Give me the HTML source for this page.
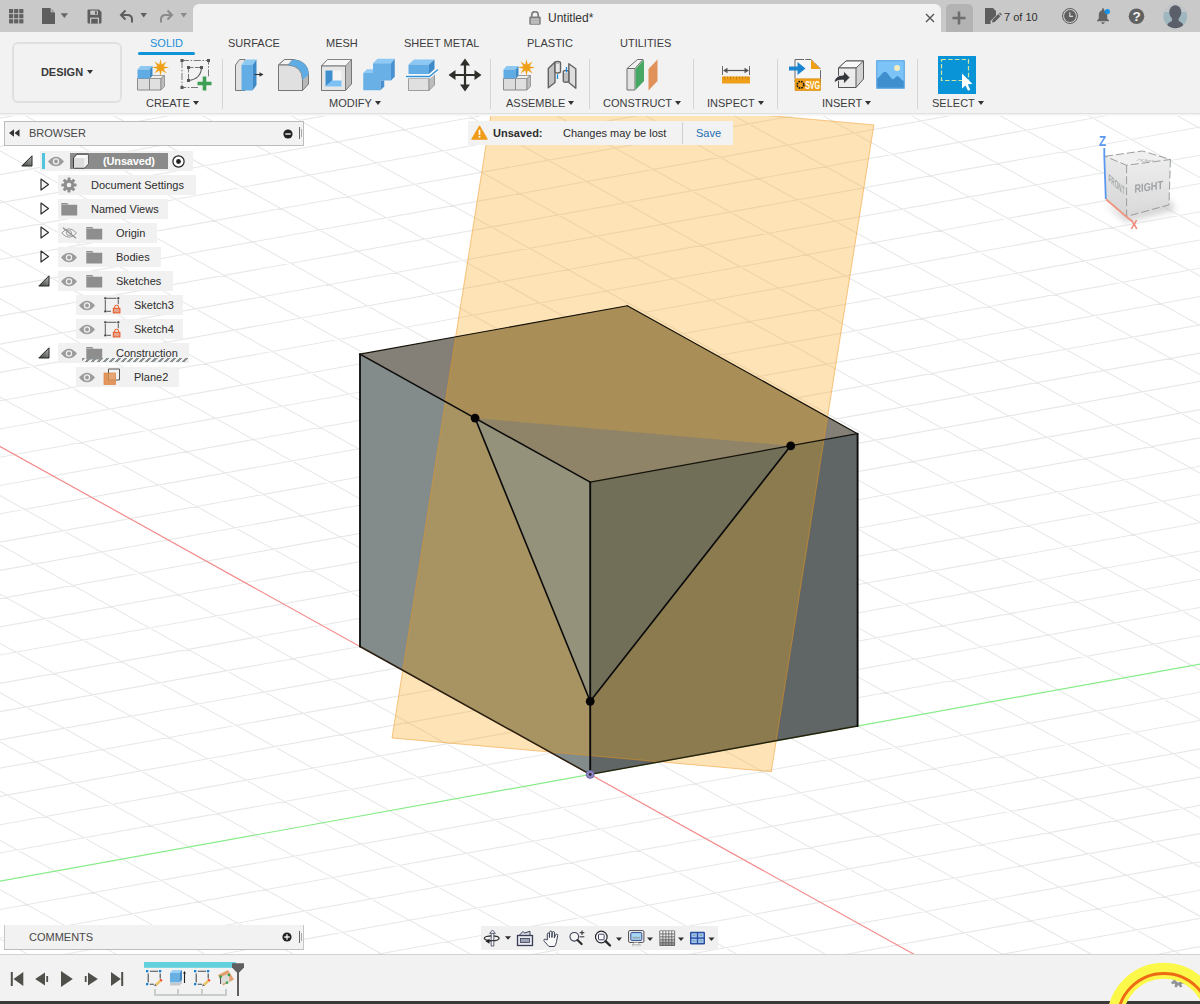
<!DOCTYPE html>
<html><head><meta charset="utf-8"><title>Fusion</title>
<style>
*{box-sizing:border-box;margin:0;padding:0}
html,body{width:1200px;height:1004px;overflow:hidden;background:#fff}
body{font-family:"Liberation Sans",sans-serif;font-size:12px;color:#3a3a3a;position:relative}
#scene{position:absolute;left:0;top:0}
.abs{position:absolute}
#titlebar{position:absolute;left:0;top:0;width:1200px;height:32px;background:#c9c9c9}
#tab{position:absolute;left:193px;top:4px;width:748px;height:28px;background:#f2f2f2;border-radius:6px 6px 0 0}
#plustab{position:absolute;left:946px;top:4px;width:27px;height:28px;background:#b3b3b3;border-radius:5px 5px 0 0}
#toolbar{position:absolute;left:0;top:32px;width:1200px;height:84px;background:#f2f2f2;border-bottom:1px solid #f8f8f8}
#tbline{position:absolute;left:0;top:113px;width:1200px;height:1px;background:#e0e2e2}
.tabname{position:absolute;top:37px;font-size:11px;color:#3c3c3c;white-space:nowrap}
.grp{position:absolute;top:97px;font-size:11px;color:#3c3c3c;white-space:nowrap}
.grp i{display:inline-block;width:0;height:0;border-left:3.5px solid transparent;border-right:3.5px solid transparent;border-top:4px solid #333;margin-left:3px;vertical-align:2px}
.sep{position:absolute;top:59px;width:1px;height:50px;background:#d6d6d6}
#design{position:absolute;left:12px;top:42px;width:110px;height:61px;border:2px solid #dfe1e0;border-radius:6px;background:#f2f2f2;font-weight:bold;font-size:11px;color:#3a3a3a;text-align:center;line-height:57px}
#design i{display:inline-block;width:0;height:0;border-left:3.5px solid transparent;border-right:3.5px solid transparent;border-top:4px solid #333;margin-left:4px;vertical-align:2px}
.ico{position:absolute}
.row{position:absolute;height:20px;background:rgba(240,240,240,0.92)}
.row span{position:absolute;top:4px;font-size:11px;color:#2d2d2d;white-space:nowrap}
</style></head><body>

<svg id="scene" width="1200" height="1004" viewBox="0 0 1200 1004">
<rect width="1200" height="1004" fill="#fff"/>
<path d="M-3618.6 405.6L1729.4 -562.4M-3580.2 426.9L1767.8 -541.1M-3541.9 448.2L1806.1 -519.8M-3503.5 469.6L1844.5 -498.4M-3465.1 490.9L1882.9 -477.1M-3426.8 512.2L1921.3 -455.8M-3388.4 533.5L1959.6 -434.5M-3350.0 554.8L1998.0 -413.2M-3311.6 576.2L2036.4 -391.8M-3273.3 597.5L2074.7 -370.5M-3234.9 618.8L2113.1 -349.2M-3196.5 640.1L2151.5 -327.9M-3158.2 661.4L2189.8 -306.6M-3119.8 682.8L2228.2 -285.2M-3081.4 704.1L2266.6 -263.9M-3043.0 725.4L2305.0 -242.6M-3004.7 746.7L2343.3 -221.3M-2966.3 768.0L2381.7 -200.0M-2927.9 789.4L2420.1 -178.6M-2889.6 810.7L2458.4 -157.3M-2851.2 832.0L2496.8 -136.0M-2812.8 853.3L2535.2 -114.7M-2774.5 874.6L2573.5 -93.4M-2736.1 896.0L2611.9 -72.0M-2697.7 917.3L2650.3 -50.7M-2659.3 938.6L2688.7 -29.4M-2621.0 959.9L2727.0 -8.1M-2582.6 981.2L2765.4 13.2M-2544.2 1002.6L2803.8 34.6M-2505.9 1023.9L2842.1 55.9M-2467.5 1045.2L2880.5 77.2M-2429.1 1066.5L2918.9 98.5M-2390.8 1087.8L2957.2 119.8M-2352.4 1109.2L2995.6 141.2M-2314.0 1130.5L3034.0 162.5M-2275.7 1151.8L3072.3 183.8M-2237.3 1173.1L3110.7 205.1M-2198.9 1194.4L3149.1 226.4M-2160.5 1215.8L3187.5 247.8M-2122.2 1237.1L3225.8 269.1M-2045.4 1279.7L3302.6 311.7M-2007.1 1301.0L3340.9 333.0M-1968.7 1322.4L3379.3 354.4M-1930.3 1343.7L3417.7 375.7M-1891.9 1365.0L3456.1 397.0M-1853.6 1386.3L3494.4 418.3M-1815.2 1407.6L3532.8 439.6M-1776.8 1429.0L3571.2 461.0M-1738.5 1450.3L3609.5 482.3M-1700.1 1471.6L3647.9 503.6M-1661.7 1492.9L3686.3 524.9M-1623.4 1514.2L3724.6 546.2M-1585.0 1535.6L3763.0 567.6M-1546.6 1556.9L3801.4 588.9M-1508.2 1578.2L3839.8 610.2M-1469.9 1599.5L3878.1 631.5M-1431.5 1620.8L3916.5 652.8M-1393.1 1642.2L3954.9 674.2M-1354.8 1663.5L3993.2 695.5M-1316.4 1684.8L4031.6 716.8M-1278.0 1706.1L4070.0 738.1M-1239.7 1727.4L4108.3 759.4M-1201.3 1748.8L4146.7 780.8M-1162.9 1770.1L4185.1 802.1M-1124.6 1791.4L4223.4 823.4M-1086.2 1812.7L4261.8 844.7M-1047.8 1834.0L4300.2 866.0M-1009.4 1855.4L4338.6 887.4M-971.1 1876.7L4376.9 908.7M-932.7 1898.0L4415.3 930.0M-894.3 1919.3L4453.7 951.3M-856.0 1940.6L4492.0 972.6M-817.6 1962.0L4530.4 994.0M-779.2 1983.3L4568.8 1015.3M-740.9 2004.6L4607.1 1036.6M-702.5 2025.9L4645.5 1057.9M-664.1 2047.2L4683.9 1079.2M-625.7 2068.6L4722.3 1100.6M-587.4 2089.9L4760.6 1121.9M-549.0 2111.2L4799.0 1143.2M-3618.6 405.6L-549.0 2111.2M-3551.7 393.5L-482.1 2099.1M-3484.9 381.4L-415.3 2087.0M-3418.0 369.3L-348.4 2074.9M-3351.2 357.2L-281.6 2062.8M-3284.3 345.1L-214.8 2050.7M-3217.5 333.0L-147.9 2038.6M-3150.6 320.9L-81.0 2026.5M-3083.8 308.8L-14.2 2014.4M-3016.9 296.7L52.7 2002.3M-2950.1 284.6L119.5 1990.2M-2883.2 272.5L186.4 1978.1M-2816.4 260.4L253.2 1966.0M-2749.5 248.3L320.1 1953.9M-2682.7 236.2L386.9 1941.8M-2615.8 224.1L453.8 1929.7M-2549.0 212.0L520.6 1917.6M-2482.1 199.9L587.5 1905.5M-2415.3 187.8L654.3 1893.4M-2348.4 175.7L721.2 1881.3M-2281.6 163.6L788.0 1869.2M-2214.8 151.5L854.9 1857.1M-2147.9 139.4L921.7 1845.0M-2081.0 127.3L988.6 1832.9M-2014.2 115.2L1055.4 1820.8M-1947.3 103.1L1122.2 1808.7M-1880.5 91.0L1189.1 1796.6M-1813.6 78.9L1256.0 1784.5M-1746.8 66.8L1322.8 1772.4M-1679.9 54.7L1389.7 1760.3M-1613.1 42.6L1456.5 1748.2M-1546.2 30.5L1523.3 1736.1M-1479.4 18.4L1590.2 1724.0M-1412.5 6.3L1657.1 1711.9M-1345.7 -5.8L1723.9 1699.8M-1278.8 -17.9L1790.8 1687.7M-1212.0 -30.0L1857.6 1675.6M-1145.1 -42.1L1924.5 1663.5M-1078.3 -54.2L1991.3 1651.4M-1011.4 -66.3L2058.2 1639.3M-877.7 -90.5L2191.8 1615.1M-810.9 -102.6L2258.7 1603.0M-744.0 -114.7L2325.6 1590.9M-677.2 -126.8L2392.4 1578.8M-610.3 -138.9L2459.2 1566.7M-543.5 -151.0L2526.1 1554.6M-476.6 -163.1L2592.9 1542.5M-409.8 -175.2L2659.8 1530.4M-342.9 -187.3L2726.7 1518.3M-276.1 -199.4L2793.5 1506.2M-209.2 -211.5L2860.3 1494.1M-142.4 -223.6L2927.2 1482.0M-75.5 -235.7L2994.1 1469.9M-8.7 -247.8L3060.9 1457.8M58.1 -259.9L3127.8 1445.7M125.0 -272.0L3194.6 1433.6M191.8 -284.1L3261.4 1421.5M258.7 -296.2L3328.3 1409.4M325.5 -308.3L3395.1 1397.3M392.4 -320.4L3462.0 1385.2M459.2 -332.5L3528.8 1373.1M526.1 -344.6L3595.7 1361.0M593.0 -356.7L3662.6 1348.9M659.8 -368.8L3729.4 1336.8M726.6 -380.9L3796.2 1324.7M793.5 -393.0L3863.1 1312.6M860.3 -405.1L3929.9 1300.5M927.2 -417.2L3996.8 1288.4M994.0 -429.3L4063.6 1276.3M1060.9 -441.4L4130.5 1264.2M1127.8 -453.5L4197.4 1252.1M1194.6 -465.6L4264.2 1240.0M1261.4 -477.7L4331.0 1227.9M1328.3 -489.8L4397.9 1215.8M1395.2 -501.9L4464.8 1203.7M1462.0 -514.0L4531.6 1191.6M1528.8 -526.1L4598.4 1179.5M1595.7 -538.2L4665.3 1167.4M1662.5 -550.3L4732.1 1155.3M1729.4 -562.4L4799.0 1143.2" stroke="#e7e9e9" stroke-width="1.1" fill="none"/>
<path d="M-944.6 -78.4L2125.0 1627.2" stroke="#f48c8c" stroke-width="1.2" fill="none"/>
<path d="M-2083.8 1258.4L3264.2 290.4" stroke="#88ec88" stroke-width="1.2" fill="none"/>
<defs><clipPath id="cpl"><polygon points="494.60,91.20 873.90,124.90 771.30,771.70 392.00,738.00"/></clipPath>
<clipPath id="cout"><path clip-rule="evenodd" d="M0 0H1200V1004H0Z M359.98 646.48 L590.20 774.40 L857.60 726.00 L857.60 433.68 L627.38 305.76 L359.98 354.16 Z"/></clipPath></defs>
<polygon points="359.98,646.48 590.20,774.40 590.20,482.08 359.98,354.16" fill="rgb(131,140,139)"/>
<polygon points="590.20,774.40 857.60,726.00 857.60,433.68 590.20,482.08" fill="rgb(96,102,101)"/>
<polygon points="359.98,354.16 590.20,482.08 857.60,433.68 627.38,305.76" fill="rgb(132,128,120)"/>
<g clip-path="url(#cpl)">
<polygon points="359.98,646.48 590.20,774.40 590.20,482.08 359.98,354.16" fill="rgb(168,148,98)"/>
<polygon points="590.20,774.40 857.60,726.00 857.60,433.68 590.20,482.08" fill="rgb(139,123,78)"/>
<polygon points="359.98,354.16 590.20,482.08 857.60,433.68 627.38,305.76" fill="rgb(169,142,87)"/>
</g>
<polygon points="475.09,418.12 590.20,482.08 590.20,701.32" fill="rgb(148,146,123)"/>
<polygon points="790.75,445.78 590.20,482.08 590.20,701.32" fill="rgb(114,111,89)"/>
<polygon points="475.09,418.12 590.20,482.08 790.75,445.78" fill="rgb(144,132,104)"/>
<polygon points="494.60,91.20 873.90,124.90 771.30,771.70 392.00,738.00" fill="rgb(250,158,0)" fill-opacity="0.285" clip-path="url(#cout)"/>
<polygon points="494.60,91.20 873.90,124.90 771.30,771.70 392.00,738.00" fill="none" stroke="rgb(240,150,30)" stroke-opacity="0.5" stroke-width="1"/>
<line x1="359.98" y1="646.48" x2="590.20" y2="774.40" stroke="#2a2012" stroke-width="1.5" stroke-linecap="round"/>
<line x1="590.20" y1="774.40" x2="857.60" y2="726.00" stroke="#26200e" stroke-width="1.4" stroke-linecap="round"/>
<line x1="359.98" y1="646.48" x2="359.98" y2="354.16" stroke="#0b0b0b" stroke-width="1.8" stroke-linecap="round"/>
<line x1="857.60" y1="726.00" x2="857.60" y2="433.68" stroke="#0b0b0b" stroke-width="1.9" stroke-linecap="round"/>
<line x1="590.20" y1="774.40" x2="590.20" y2="482.08" stroke="#0b0b0b" stroke-width="1.9" stroke-linecap="round"/>
<line x1="359.98" y1="354.16" x2="590.20" y2="482.08" stroke="#0b0b0b" stroke-width="1.5" stroke-linecap="round"/>
<line x1="590.20" y1="482.08" x2="857.60" y2="433.68" stroke="#14120a" stroke-width="1.2" stroke-linecap="round"/>
<line x1="359.98" y1="354.16" x2="627.38" y2="305.76" stroke="#14120a" stroke-width="1.2" stroke-linecap="round"/>
<line x1="627.38" y1="305.76" x2="857.60" y2="433.68" stroke="#14120a" stroke-width="1.2" stroke-linecap="round"/>
<line x1="475.09" y1="418.12" x2="590.20" y2="701.32" stroke="#0b0b0b" stroke-width="1.6" stroke-linecap="round"/>
<line x1="790.75" y1="445.78" x2="590.20" y2="701.32" stroke="#0b0b0b" stroke-width="1.7" stroke-linecap="round"/>
<circle cx="475.09" cy="418.12" r="4.4" fill="#050505"/>
<circle cx="790.75" cy="445.78" r="4.4" fill="#050505"/>
<circle cx="590.20" cy="701.32" r="4.4" fill="#050505"/>
<circle cx="590.20" cy="774.40" r="4" fill="#8d84c6" stroke="#6c66a0" stroke-width="0.8"/>
<circle cx="590.20" cy="774.40" r="1.3" fill="#222"/>
</svg>
<div id="titlebar">
 <div id="tab"></div><div id="plustab"></div>
 <!-- app grid -->
 <svg class="ico" style="left:8.700px;top:8.700px" width="15" height="15" viewBox="0 0 15 15"><g fill="#616161"><rect x="0.0" y="0.0" width="4.200" height="4.200"/><rect x="5.1" y="0.0" width="4.200" height="4.200"/><rect x="10.2" y="0.0" width="4.200" height="4.200"/><rect x="0.0" y="5.1" width="4.200" height="4.200"/><rect x="5.1" y="5.1" width="4.200" height="4.200"/><rect x="10.2" y="5.1" width="4.200" height="4.200"/><rect x="0.0" y="10.2" width="4.200" height="4.200"/><rect x="5.1" y="10.2" width="4.200" height="4.200"/><rect x="10.2" y="10.2" width="4.200" height="4.200"/></g></svg>
 <!-- file -->
 <svg class="ico" style="left:42px;top:8px" width="28" height="17" viewBox="0 0 28 17"><path d="M0 0H8.5L13 4.5V16H0Z" fill="#5e5e5e"/><path d="M9 0V4H13" fill="#c9c9c9" stroke="#c9c9c9" stroke-width="0.6"/><path d="M9.600 1V3.500H12.200Z" fill="#8a8a8a"/><path d="M18.700 5.300H26L22.350 9.900Z" fill="#666"/></svg>
 <!-- save -->
 <svg class="ico" style="left:87px;top:8.500px" width="15" height="15" viewBox="0 0 15 15"><path d="M0.5 1.5a1 1 0 0 1 1-1H12L14.5 3V13.5a1 1 0 0 1-1 1H1.5a1 1 0 0 1-1-1Z" fill="#5e5e5e"/><rect x="3.3" y="1.6" width="7.6" height="4.2" fill="#c9c9c9"/><rect x="8" y="2.2" width="1.8" height="3" fill="#5e5e5e"/><rect x="3" y="8.6" width="9" height="5.9" fill="#c9c9c9"/><rect x="4.2" y="9.8" width="6.6" height="4.7" fill="#5e5e5e"/></svg>
 <!-- undo -->
 <svg class="ico" style="left:119px;top:9px" width="30" height="15" viewBox="0 0 30 15"><path d="M6.5 1.5L2 6L6.5 10.5" fill="none" stroke="#5e5e5e" stroke-width="2"/><path d="M2.5 6H8.5Q13 6 13 10.5V13.5" fill="none" stroke="#5e5e5e" stroke-width="2"/><path d="M21.5 4H28L24.7 8.5Z" fill="#5e5e5e"/></svg>
 <!-- redo -->
 <svg class="ico" style="left:159px;top:9px" width="30" height="15" viewBox="0 0 30 15"><g transform="translate(15,0) scale(-1,1)"><path d="M6.5 1.5L2 6L6.5 10.5" fill="none" stroke="#8a8a8a" stroke-width="2"/><path d="M2.5 6H8.5Q13 6 13 10.5V13.5" fill="none" stroke="#8a8a8a" stroke-width="2"/></g><path d="M21.5 4H28L24.7 8.5Z" fill="#8a8a8a"/></svg>
 <!-- lock + title -->
 <svg class="ico" style="left:529px;top:11px" width="12" height="14" viewBox="0 0 12 14"><path d="M2.8 6V3.8a3.2 3.2 0 0 1 6.4 0V6" fill="none" stroke="#7d7d7d" stroke-width="1.7"/><rect x="0.3" y="5.6" width="11.4" height="8.1" rx="1" fill="#7d7d7d"/><rect x="1.8" y="7.6" width="8.4" height="1" fill="#f2f2f2"/><rect x="1.8" y="9.6" width="8.4" height="1" fill="#f2f2f2"/><rect x="1.8" y="11.5" width="8.4" height="1" fill="#f2f2f2"/></svg>
 <div class="abs" style="left:548px;top:11px;font-size:12px;color:#333">Untitled*</div>
 <!-- close x -->
 <svg class="ico" style="left:925px;top:13px" width="10" height="10" viewBox="0 0 10 10"><path d="M1 1L9 9M9 1L1 9" stroke="#555" stroke-width="1.4"/></svg>
 <!-- plus -->
 <svg class="ico" style="left:952px;top:11px" width="14" height="14" viewBox="0 0 14 14"><path d="M7 0.5V13.5M0.5 7H13.5" stroke="#6e6e6e" stroke-width="2.6"/></svg>
 <!-- job status -->
 <svg class="ico" style="left:985px;top:8px" width="17" height="17" viewBox="0 0 17 17"><path d="M0 0H8L11 3V7.5L5.5 13V16H0Z" fill="#5e5e5e"/><path d="M7 14.5L7.6 11.8L13.3 6.1L15.4 8.2L9.7 13.9Z" fill="#5e5e5e"/><path d="M14 5.4L14.9 4.5L17 6.6L16.1 7.5Z" fill="#5e5e5e"/></svg>
 <div class="abs" style="left:1004px;top:11px;font-size:11px;color:#2e2e2e">7 of 10</div>
 <!-- clock -->
 <svg class="ico" style="left:1061px;top:7px" width="18" height="18" viewBox="0 0 18 18"><circle cx="9" cy="9" r="7.500" fill="none" stroke="#5e5e5e" stroke-width="1"/><circle cx="9" cy="9" r="5.900" fill="#606060"/><path d="M8.800 5.300V9.300H12" fill="none" stroke="#d4d4d4" stroke-width="1.200"/></svg>
 <!-- bell -->
 <svg class="ico" style="left:1094px;top:7px" width="18" height="18" viewBox="0 0 18 18"><path d="M8 2.200a1 1 0 0 1 2 0V3.200C12.300 3.800 13.200 5.800 13.200 8V11.500L15 13.600V14.300H3V13.600L4.800 11.500V8C4.800 5.800 5.700 3.800 8 3.200Z" fill="#646464"/><path d="M7.300 15.200H10.700A1.700 1.700 0 0 1 7.300 15.200Z" fill="#646464"/><circle cx="13.300" cy="4.600" r="2.700" fill="#1592e6"/></svg>
 <!-- help -->
 <svg class="ico" style="left:1128px;top:8px" width="17" height="17" viewBox="0 0 17 17"><circle cx="8.500" cy="8.200" r="7.800" fill="#616161"/><text x="8.500" y="13" font-family="Liberation Sans" font-weight="bold" font-size="13.500" fill="#f4f4f4" text-anchor="middle">?</text></svg>
 <!-- avatar -->
 <svg class="ico" style="left:1163px;top:4px" width="25" height="25" viewBox="0 0 25 25"><defs><clipPath id="av"><circle cx="12.300" cy="12.300" r="11.900"/></clipPath></defs><g clip-path="url(#av)"><rect width="25" height="25" fill="#a0b6be"/><rect width="25" height="8" fill="#c2c6ca"/><rect y="20" width="25" height="5" fill="#b4bcc2"/><g fill="#5a5f69"><ellipse cx="12.300" cy="8.300" rx="6" ry="7"/><path d="M9 13H15.600V17Q20 18 22 25H2.500Q4.500 18 9 17Z"/></g></g></svg>
</div>

<div id="toolbar"></div><div id="tbline"></div>
<div id="design">DESIGN<i></i></div>
<div class="tabname" style="left:150px;color:#1a8fd8">SOLID</div>
<div class="abs" style="left:138px;top:52px;width:57px;height:3px;background:#1193d9;border-radius:1.5px"></div>
<div class="tabname" style="left:228px">SURFACE</div>
<div class="tabname" style="left:326px">MESH</div>
<div class="tabname" style="left:404px">SHEET METAL</div>
<div class="tabname" style="left:527px">PLASTIC</div>
<div class="tabname" style="left:620px">UTILITIES</div>
<div class="grp" style="left:146px">CREATE<i></i></div>
<div class="grp" style="left:329px">MODIFY<i></i></div>
<div class="grp" style="left:506px">ASSEMBLE<i></i></div>
<div class="grp" style="left:603px">CONSTRUCT<i></i></div>
<div class="grp" style="left:707px">INSPECT<i></i></div>
<div class="grp" style="left:822px">INSERT<i></i></div>
<div class="grp" style="left:932px">SELECT<i></i></div>
<div class="sep" style="left:222px"></div><div class="sep" style="left:490px"></div><div class="sep" style="left:589px"></div><div class="sep" style="left:693px"></div><div class="sep" style="left:777px"></div><div class="sep" style="left:917px"></div>
<!-- 1 new component -->
<svg class="ico" style="left:136px;top:58px" width="34" height="34" viewBox="0 0 34 34">
 <path d="M1.500 20.500H13.500V32H1.500Z" fill="#dcdcdc" stroke="#8a8a8a" stroke-width="1"/>
 <path d="M13.500 20.500H25V32H13.500Z" fill="#e0e0e0" stroke="#8a8a8a" stroke-width="1"/>
 <path d="M13.500 20.500L16.500 17.500H28.500L25 20.500Z" fill="#efefef" stroke="#8a8a8a" stroke-width="0.8"/>
 <path d="M25 20.500L28.500 17.500V28.500L25 32Z" fill="#bdbdbd" stroke="#8a8a8a" stroke-width="0.8"/>
 <path d="M1.500 11.500L4.500 8H16.500L13.500 11.500Z" fill="#8cc8f2"/>
 <path d="M1.500 11.500H13.500V20.500H1.500Z" fill="#5fabe4"/>
 <path d="M13.500 11.500L16.500 8V17.500L13.500 20.500Z" fill="#3d8cc9"/>
 <path d="M24.50 0.90L25.76 6.45L30.58 3.42L27.55 8.24L33.10 9.50L27.55 10.76L30.58 15.58L25.76 12.55L24.50 18.10L23.24 12.55L18.42 15.58L21.45 10.76L15.90 9.50L21.45 8.24L18.42 3.42L23.24 6.45Z" fill="#f0a018"/>
</svg>
<!-- 2 create sketch -->
<svg class="ico" style="left:179px;top:58px" width="34" height="34" viewBox="0 0 34 34">
 <path d="M3 2.500H29.500V20M19 29.500H3V2.500" fill="none" stroke="#6a6a6a" stroke-width="0.9" stroke-dasharray="7 1.6 1.600 1.600"/>
 <rect x="1.500" y="1" width="3" height="3" fill="#555"/><rect x="28" y="1" width="3" height="3" fill="#555"/><rect x="1.500" y="28" width="3" height="3" fill="#555"/>
 <path d="M9.500 9.500H22.500M9.500 9.500V22.500" fill="none" stroke="#6a6a6a" stroke-width="0.9" stroke-dasharray="5 1.500"/>
 <path d="M22.500 9.500Q22 21 9.500 22.500" fill="none" stroke="#606060" stroke-width="1.1"/>
 <rect x="8" y="8" width="3" height="3" fill="#555"/><rect x="21" y="8" width="3" height="3" fill="#555"/><rect x="8" y="21" width="3" height="3" fill="#555"/>
 <path d="M25.500 18.500V32.500M18.500 25.500H32.500" stroke="#3fa055" stroke-width="3.600"/>
</svg>
<!-- 3 press pull -->
<svg class="ico" style="left:233px;top:58px" width="34" height="34" viewBox="0 0 34 34">
 <path d="M2.500 7L6.500 1.500H12V32.500H2.500Z" fill="#e2e2e2" stroke="#777" stroke-width="1"/>
 <path d="M8.500 7L12.500 1.500H23.500L19.500 7Z" fill="#8cc8f2"/>
 <path d="M8.500 7H19.500V32.500H8.500Z" fill="#62ade6"/>
 <path d="M19.500 7L23.500 1.500V27L19.500 32.500Z" fill="#3c8ac8"/>
 <path d="M21.500 16.500H27.500" stroke="#333" stroke-width="1.100"/><path d="M26.500 14.200L30.500 16.500L26.500 18.800Z" fill="#333"/>
</svg>
<!-- 4 fillet -->
<svg class="ico" style="left:276px;top:58px" width="34" height="34" viewBox="0 0 34 34">
 <path d="M2.500 7L8.500 1.500H17Q32.500 3 32.500 17V26L26.500 32.500H2.500Z" fill="#b8b8b8" stroke="#777" stroke-width="1"/><path d="M2.500 7L8.500 1.500H17L12 7Z" fill="#f2f2f2" stroke="#777" stroke-width="1"/>
 <path d="M2.500 7H12Q26.500 8 26.500 22V32.500H2.500Z" fill="#e0e0e0" stroke="#777" stroke-width="1"/>
 <path d="M12 7L17 1.500Q32.500 3 32.500 17L26.500 22Q26.500 8 12 7Z" fill="#5fabe4"/>
</svg>
<!-- 5 shell -->
<svg class="ico" style="left:319px;top:58px" width="34" height="34" viewBox="0 0 34 34">
 <path d="M2.500 8L8.500 1.500H32.500V26L26.500 32.500H2.500Z" fill="#bcbcbc" stroke="#777" stroke-width="1"/>
 <path d="M2.500 8L8.500 1.500H32.500L26.500 8Z" fill="#f6f6f6" stroke="#777" stroke-width="0.800"/>
 <path d="M2.500 8H26.500V32.500H2.500Z" fill="#e6e6e6" stroke="#777" stroke-width="1"/>
 <path d="M6.500 12.500H22.500V28.500H6.500Z" fill="#f4f4f4"/>
 <path d="M6.500 12.500H13.500V22.500L6.500 28.500Z" fill="#3f8fce"/>
 <path d="M6.500 28.500L13.500 22.500H22.500V28.500Z" fill="#7cc0f4"/>
</svg>
<!-- 6 combine -->
<svg class="ico" style="left:362px;top:58px" width="34" height="34" viewBox="0 0 34 34">
 <path d="M11 5.250L15.500 0.750H32.750L29 5.250Z" fill="#8ecaf5"/>
 <path d="M29 5.250L32.750 0.750V18.750L29 22.500Z" fill="#4890d0"/>
 <path d="M11 5.250H29V22.500H11Z" fill="#68b0e5"/>
 <path d="M1.250 15L5 11.250H11V15Z" fill="#8ecaf5"/>
 <path d="M1.250 15H18.500V32.250H1.250Z" fill="#68b0e5"/>
 <path d="M18.500 22.500H22.250V28.500L18.500 32.250Z" fill="#4890d0"/>
</svg>
<!-- 7 split body -->
<svg class="ico" style="left:405px;top:58px" width="34" height="34" viewBox="0 0 34 34">
 <path d="M3.500 20.500H24V32.500H3.500Z" fill="#e0e0e0" stroke="#8a8a8a" stroke-width="0.800"/>
 <path d="M24 20.500L29.500 15.500V27L24 32.500Z" fill="#bdbdbd" stroke="#8a8a8a" stroke-width="0.800"/>
 <path d="M3.500 6.500L9 1.500H29.500L24 6.500Z" fill="#8cc8f2"/>
 <path d="M3.500 6.500H24V16H3.500Z" fill="#62ade6"/>
 <path d="M24 6.500L29.500 1.500V11L24 16Z" fill="#3c8ac8"/>
 <path d="M1 18.500H24.500L33 11.500" fill="none" stroke="#fff" stroke-width="3.400"/>
 <path d="M1 18.500H24.500L33 11.500" fill="none" stroke="#2d8fd6" stroke-width="1.400"/>
</svg>
<!-- 8 move -->
<svg class="ico" style="left:448px;top:58px" width="34" height="34" viewBox="0 0 34 34">
 <path d="M17 5V29M5 17H29" stroke="#2f2f2a" stroke-width="2.200"/>
 <path d="M17 0.500L22 7.500H12Z M17 33.500L22 26.500H12Z M0.500 17L7.500 12V22Z M33.500 17L26.500 12V22Z" fill="#2f2f2a"/>
</svg>
<!-- 9 assemble new component -->
<svg class="ico" style="left:502px;top:58px" width="34" height="34" viewBox="0 0 34 34">
 <path d="M1.500 20.500H13.500V32H1.500Z" fill="#dcdcdc" stroke="#8a8a8a" stroke-width="1"/>
 <path d="M13.500 20.500H25V32H13.500Z" fill="#e0e0e0" stroke="#8a8a8a" stroke-width="1"/>
 <path d="M13.500 20.500L16.500 17.500H28.500L25 20.500Z" fill="#efefef" stroke="#8a8a8a" stroke-width="0.800"/>
 <path d="M25 20.500L28.500 17.500V28.500L25 32Z" fill="#bdbdbd" stroke="#8a8a8a" stroke-width="0.800"/>
 <path d="M1.500 11.500L4.500 8H16.500L13.500 11.500Z" fill="#8cc8f2"/>
 <path d="M1.500 11.500H13.500V20.500H1.500Z" fill="#5fabe4"/>
 <path d="M13.500 11.500L16.500 8V17.500L13.500 20.500Z" fill="#3d8cc9"/>
 <path d="M24.50 0.90L25.76 6.45L30.58 3.42L27.55 8.24L33.10 9.50L27.55 10.76L30.58 15.58L25.76 12.55L24.50 18.10L23.24 12.55L18.42 15.58L21.45 10.76L15.90 9.50L21.45 8.24L18.42 3.42L23.24 6.45Z" fill="#f0a018"/>
</svg>
<!-- 10 joint -->
<svg class="ico" style="left:546px;top:58px" width="32" height="34" viewBox="0 0 32 34">
 <g stroke="#636363" stroke-width="1.400" stroke-linejoin="round">
 <path d="M2.300 10.500L9 4V24.500L2.300 29.700Z" fill="#c2c2c2"/>
 <path d="M9 5Q9 3.500 11.700 3.500T14.500 5V13.500Q14.500 15 11.700 15T9 13.500Z" fill="#e6e6e6"/>
 <path d="M22.800 5.700L29.800 10.800V30.300L22.800 24.500Z" fill="#dedede"/>
 <path d="M17.300 14Q17.300 12.500 20 12.500T22.800 14V22.800Q22.800 24.300 20 24.300T17.300 22.800Z" fill="#c0c0c0"/>
 </g>
 <ellipse cx="11.700" cy="5.300" rx="1.500" ry="0.600" fill="#aaa"/>
 <ellipse cx="20" cy="14.200" rx="2" ry="0.900" fill="#eee"/>
 <path d="M11.500 16.300V21M20.500 9V14.500" stroke="#1b8fd8" stroke-width="1.300"/>
</svg>
<!-- 11 construct plane -->
<svg class="ico" style="left:625px;top:58px" width="34" height="34" viewBox="0 0 34 34">
 <path d="M2 10.500L12.500 1.500H18L10 10.500Z" fill="#f0f0f0" stroke="#6e6e6e" stroke-width="1"/>
 <path d="M2 10.500H10V32H2Z" fill="#e2e2e2" stroke="#6e6e6e" stroke-width="1"/>
 <path d="M10.500 11L19 1.500V23L10.500 32Z" fill="#47a866"/>
 <path d="M23.500 11L32.500 1.500V23L23.500 32.500Z" fill="#e0925a"/>
</svg>
<!-- 12 measure -->
<svg class="ico" style="left:720px;top:64px" width="32" height="22" viewBox="0 0 32 22">
 <path d="M2.500 2V11M29.500 2V11" stroke="#6a6a6a" stroke-width="1"/>
 <path d="M5 6.500H27" stroke="#555" stroke-width="1.200"/>
 <path d="M3 6.500L7.500 3.800V9.200Z M29 6.500L24.500 3.800V9.200Z" fill="#555"/>
 <rect x="2" y="12.500" width="28" height="7" fill="#f0a018"/>
 <path d="M4.500 12.500V15.500M7.500 12.500V14.500M10.500 12.500V15.500M13.500 12.500V14.500M16.500 12.500V15.500M19.500 12.500V14.500M22.500 12.500V15.500M25.500 12.500V14.500M28 12.500V15.500" stroke="#c07a08" stroke-width="0.800"/>
</svg>
<!-- 13 insert svg -->
<svg class="ico" style="left:788px;top:58px" width="34" height="34" viewBox="0 0 34 34">
 <path d="M7 1.500H23L32.500 11V24H7Z" fill="#f6f6f6" stroke="#5a5a5a" stroke-width="0.900" stroke-dasharray="9 1.200"/>
 <path d="M23 1.500L32.500 11H23Z" fill="#f0a018"/>
 <path d="M1 8.500H9.500V4L17.500 10.500L9.500 17V12.500H1Z" fill="#1b85d0"/>
 <rect x="7" y="20.800" width="25.500" height="11.800" fill="#f0a018" stroke="#d28a10" stroke-width="0.600"/>
 <circle cx="12.500" cy="26.800" r="3.300" fill="none" stroke="#1a1a1a" stroke-width="1.700" stroke-dasharray="1.700 0.900"/>
 <text x="17.200" y="30.800" font-family="Liberation Sans" font-weight="bold" font-size="10.500" fill="#fff" textLength="14.800" lengthAdjust="spacingAndGlyphs">SVG</text>
</svg>
<!-- 14 insert derive -->
<svg class="ico" style="left:832px;top:58px" width="34" height="34" viewBox="0 0 34 34">
 <path d="M6.500 10L14 3H31.500V21L24 29.500H6.500Z" fill="#d2d2d2" stroke="#4a4a4a" stroke-width="0.900"/>
 <path d="M6.500 10L14 3H31.500L24 10Z" fill="#f8f8f8" stroke="#4a4a4a" stroke-width="0.900"/>
 <path d="M6.500 10H24V29.500H6.500Z" fill="#ececec" stroke="#4a4a4a" stroke-width="0.900"/>
 <path d="M2 25Q3 17 11.500 17V13L18 19.500L11.500 26V22Q5.500 21.500 2 25Z" fill="#33363a" stroke="#f4f4f4" stroke-width="0.800"/>
</svg>
<!-- 15 canvas -->
<svg class="ico" style="left:876px;top:60px" width="29" height="29" viewBox="0 0 31 31">
 <rect x="0.800" y="0.800" width="29.400" height="29.400" fill="#7cc4f8" stroke="#4a9be0" stroke-width="1"/>
 <path d="M1.300 20Q4 18 6.500 14.500Q9.500 10.500 12.500 14.500Q15.500 19 17.500 20.500Q19 21 20.500 19Q23 16 25.500 19Q27.500 21.500 29.700 22.500V29.700H1.300Z" fill="#3f8fce"/>
 <circle cx="22.500" cy="8.500" r="3.200" fill="#f2ecc0"/>
</svg>
<!-- 16 select -->
<svg class="ico" style="left:938px;top:56px" width="38" height="38" viewBox="0 0 38 38">
 <rect width="38" height="38" fill="#0a94d8"/>
 <rect x="3.500" y="3.500" width="27" height="21" fill="none" stroke="#cfe6a0" stroke-width="1.200" stroke-dasharray="4.500 2.200"/>
 <path d="M24 17.500L34.500 28L29.800 28.300L32.300 33.800L30 34.800L27.500 29.500L24 32.500Z" fill="#fff"/>
</svg>

<!-- BROWSER header -->
<div class="abs" style="left:4px;top:121px;width:300px;height:25px;background:#f2f2f2;border:1px solid #bcbcbc"></div>
<svg class="ico" style="left:9px;top:129px" width="11" height="8" viewBox="0 0 11 8"><path d="M0 4L5 0.300V7.700ZM5.500 4L10.500 0.300V7.700Z" fill="#333"/></svg>
<div class="abs" style="left:29px;top:127px;font-size:11px;color:#484848">BROWSER</div>
<svg class="ico" style="left:283px;top:129px" width="10" height="10" viewBox="0 0 10 10"><circle cx="5" cy="5" r="4.600" fill="#222"/><rect x="2.300" y="4.300" width="5.400" height="1.400" fill="#f2f2f2"/></svg>
<div class="abs" style="left:299px;top:127px;width:1px;height:12px;background:#666"></div>
<div class="abs" style="left:301px;top:129px;width:1px;height:8px;background:#aaa"></div>
<svg width="0" height="0" style="position:absolute"><defs>
 <g id="eye"><path d="M0 5.500Q8 -4.200 16 5.500Q8 15.200 0 5.500Z" fill="#9b9b9b"/><circle cx="8" cy="5.500" r="3.200" fill="#f0f0f0"/><circle cx="8" cy="5.500" r="1.900" fill="#9b9b9b"/></g>
 <g id="folder"><path d="M0.300 2H6.300L7.500 3.800H16.200V14.500H0.300Z" fill="#8e8e8e"/><path d="M0.300 3.500H6.800" stroke="#d8d8d8" stroke-width="0.500"/></g>
 <g id="arrowR"><path d="M1 1L8.500 6.500L1 12Z" fill="#f6f6f6" stroke="#2f2f2f" stroke-width="1.200" stroke-linejoin="round"/></g>
 <linearGradient id="agr" x1="1" y1="0" x2="0.3" y2="1"><stop offset="0" stop-color="#b4bab4"/><stop offset="1" stop-color="#4c504c"/></linearGradient><g id="arrowD"><path d="M11 0.800V11H0.800Z" fill="url(#agr)" stroke="#262626" stroke-width="1" stroke-linejoin="round"/></g>
 <g id="sketchico"><path d="M2.500 1.300H12.500M1.300 3V13M14.300 3V7.300M2.500 14.300H7" fill="none" stroke="#4a4a4a" stroke-width="0.900"/><rect x="0.300" y="0.300" width="2" height="2" fill="#3a3a3a"/><rect x="13.300" y="0.300" width="2" height="2" fill="#3a3a3a"/><rect x="0.300" y="13.300" width="2" height="2" fill="#3a3a3a"/><path d="M10.600 11.300V10.200a2 2 0 0 1 4 0V11.300" fill="none" stroke="#e8541e" stroke-width="1"/><rect x="9.300" y="11.300" width="6.600" height="4.600" fill="#eaa68c" stroke="#e8541e" stroke-width="1"/></g>
</defs></svg>
<!-- row1 -->
<svg class="ico" style="left:21px;top:155px" width="12" height="12" viewBox="0 0 12 12"><use href="#arrowD"/></svg>
<div class="row" style="left:40px;top:151px;width:153px"></div>
<div class="abs" style="left:42px;top:153px;width:3px;height:16px;background:#4fc4dc"></div>
<svg class="ico" style="left:48px;top:156px" width="16" height="11" viewBox="0 0 16 11"><use href="#eye"/></svg>
<div class="abs" style="left:70px;top:153px;width:98px;height:16px;background:#8b8b8b"></div>
<svg class="ico" style="left:72px;top:153px" width="18" height="16" viewBox="0 0 18 16"><path d="M1.500 5L5 1.200H16V11L12.500 15H2.500Q1.500 15 1.500 14Z" fill="#fafafa" stroke="#3a3a3a" stroke-width="1" stroke-linejoin="round"/><path d="M2 5H12.500V14.500H2Z" fill="#dedede"/><path d="M12.500 5L16 1.200V11L12.500 14.500Z" fill="#f0f0f0"/></svg>
<div class="abs" style="left:103px;top:155px;font-size:11px;font-weight:bold;color:#fff;letter-spacing:-0.15px">(Unsaved)</div>
<svg class="ico" style="left:172px;top:155px" width="13" height="13" viewBox="0 0 13 13"><circle cx="6.500" cy="6.500" r="5.600" fill="#fff" stroke="#222" stroke-width="1.200"/><circle cx="6.500" cy="6.500" r="2.400" fill="#222"/></svg>
<!-- row2 Document Settings -->
<svg class="ico" style="left:40px;top:178px" width="10" height="13" viewBox="0 0 10 13"><use href="#arrowR"/></svg>
<div class="row" style="left:58px;top:175px;width:138px"><span style="left:33px">Document Settings</span></div>
<svg class="ico" style="left:61px;top:177px" width="16" height="16" viewBox="0 0 18 18"><g fill="#8e8e8e"><circle cx="9" cy="9" r="6"/><g id="teeth"><rect x="7.300" y="0.500" width="3.400" height="17" rx="0.500"/><rect x="7.300" y="0.500" width="3.400" height="17" rx="0.500" transform="rotate(45 9 9)"/><rect x="7.300" y="0.500" width="3.400" height="17" rx="0.500" transform="rotate(90 9 9)"/><rect x="7.300" y="0.500" width="3.400" height="17" rx="0.500" transform="rotate(135 9 9)"/></g></g><circle cx="9" cy="9" r="2.600" fill="#f0f0f0"/></svg>
<!-- row3 Named Views -->
<svg class="ico" style="left:40px;top:202px" width="10" height="13" viewBox="0 0 10 13"><use href="#arrowR"/></svg>
<div class="row" style="left:58px;top:199px;width:110px"><span style="left:33px">Named Views</span></div>
<svg class="ico" style="left:61px;top:201px" width="17" height="15" viewBox="0 0 17 15"><use href="#folder"/></svg>
<!-- row4 Origin -->
<svg class="ico" style="left:40px;top:226px" width="10" height="13" viewBox="0 0 10 13"><use href="#arrowR"/></svg>
<div class="row" style="left:58px;top:223px;width:99px"><span style="left:58px">Origin</span></div>
<svg class="ico" style="left:61px;top:227px" width="17" height="12" viewBox="0 0 17 12"><path d="M0.800 6Q8 -2.500 15.500 6Q8 14.500 0.800 6Z" fill="none" stroke="#9b9b9b" stroke-width="1"/><circle cx="8" cy="6" r="2.500" fill="none" stroke="#9b9b9b" stroke-width="1"/><path d="M2 0.800L15 11.200" stroke="#8a8a8a" stroke-width="1.100"/></svg>
<svg class="ico" style="left:86px;top:225px" width="17" height="15" viewBox="0 0 17 15"><use href="#folder"/></svg>
<!-- row5 Bodies -->
<svg class="ico" style="left:40px;top:250px" width="10" height="13" viewBox="0 0 10 13"><use href="#arrowR"/></svg>
<div class="row" style="left:58px;top:247px;width:103px"><span style="left:58px">Bodies</span></div>
<svg class="ico" style="left:61px;top:252px" width="16" height="11" viewBox="0 0 16 11"><use href="#eye"/></svg>
<svg class="ico" style="left:86px;top:249px" width="17" height="15" viewBox="0 0 17 15"><use href="#folder"/></svg>
<!-- row6 Sketches -->
<svg class="ico" style="left:38px;top:275px" width="12" height="12" viewBox="0 0 12 12"><use href="#arrowD"/></svg>
<div class="row" style="left:58px;top:271px;width:115px"><span style="left:58px">Sketches</span></div>
<svg class="ico" style="left:61px;top:276px" width="16" height="11" viewBox="0 0 16 11"><use href="#eye"/></svg>
<svg class="ico" style="left:86px;top:273px" width="17" height="15" viewBox="0 0 17 15"><use href="#folder"/></svg>
<!-- row7 Sketch3 -->
<div class="row" style="left:76px;top:295px;width:107px"><span style="left:58px">Sketch3</span></div>
<svg class="ico" style="left:79px;top:300px" width="16" height="11" viewBox="0 0 16 11"><use href="#eye"/></svg>
<svg class="ico" style="left:104px;top:297px" width="17" height="18" viewBox="0 0 17 18"><use href="#sketchico"/></svg>
<!-- row8 Sketch4 -->
<div class="row" style="left:76px;top:319px;width:107px"><span style="left:58px">Sketch4</span></div>
<svg class="ico" style="left:79px;top:324px" width="16" height="11" viewBox="0 0 16 11"><use href="#eye"/></svg>
<svg class="ico" style="left:104px;top:321px" width="17" height="18" viewBox="0 0 17 18"><use href="#sketchico"/></svg>
<!-- row9 Construction -->
<svg class="ico" style="left:38px;top:347px" width="12" height="12" viewBox="0 0 12 12"><use href="#arrowD"/></svg>
<div class="row" style="left:58px;top:343px;width:131px"><span style="left:58px">Construction</span></div>
<svg class="ico" style="left:61px;top:348px" width="16" height="11" viewBox="0 0 16 11"><use href="#eye"/></svg>
<svg class="ico" style="left:86px;top:345px" width="17" height="15" viewBox="0 0 17 15"><use href="#folder"/></svg>
<div class="abs" style="left:82px;top:357.500px;width:106px;height:4px;background:repeating-linear-gradient(135deg,#899195 0 2.1px,rgba(240,240,240,0) 2.2px 4.3px)"></div>
<!-- row10 Plane2 -->
<div class="row" style="left:76px;top:367px;width:103px"><span style="left:58px">Plane2</span></div>
<svg class="ico" style="left:79px;top:372px" width="16" height="11" viewBox="0 0 16 11"><use href="#eye"/></svg>
<svg class="ico" style="left:103px;top:368px" width="18" height="18" viewBox="0 0 18 18"><path d="M5.500 1H16.500V12H13" fill="none" stroke="#555" stroke-width="1"/><rect x="1" y="5" width="11.500" height="11.500" fill="#e2965e" stroke="#e08a50" stroke-width="0.800"/><path d="M5.500 5V1" stroke="#555" stroke-width="1"/><path d="M5.500 5V12H12.500" fill="none" stroke="#8a7a3a" stroke-width="0.800" opacity="0.600"/><rect x="5.900" y="5.400" width="6.200" height="6.200" fill="#e8b48a" opacity="0.500"/></svg>

<!-- unsaved notification -->
<div class="abs" style="left:468px;top:121px;width:265px;height:24px;background:#f2f2f2"></div>
<svg class="ico" style="left:471px;top:125px" width="17" height="15" viewBox="0 0 17 15"><path d="M8.500 0.800L16.300 14.200H0.700Z" fill="#f09c1a" stroke="#f09c1a" stroke-width="1" stroke-linejoin="round"/><rect x="7.700" y="4.800" width="1.600" height="5.200" fill="#fff"/><rect x="7.700" y="11" width="1.600" height="1.700" fill="#fff"/></svg>
<div class="abs" style="left:493px;top:127px;font-size:11px;font-weight:bold;color:#2d2d2d">Unsaved:</div>
<div class="abs" style="left:563px;top:127px;font-size:11px;color:#2d2d2d">Changes may be lost</div>
<div class="abs" style="left:682px;top:122px;width:1px;height:22px;background:#cfcfcf"></div>
<div class="abs" style="left:696px;top:127px;font-size:11px;color:#1a6fb5">Save</div>
<!-- view cube -->
<svg class="ico" style="left:1070px;top:120px" width="130" height="130" viewBox="1070 120 130 130">
 <defs><filter id="blur1" x="-30%" y="-30%" width="160%" height="160%"><feGaussianBlur stdDeviation="3"/></filter><filter id="blur2"><feGaussianBlur stdDeviation="0.400"/></filter>
 <linearGradient id="vg1" x1="0" y1="0" x2="0" y2="1"><stop offset="0" stop-color="#ececec"/><stop offset="1" stop-color="#d6d6d6"/></linearGradient>
 <linearGradient id="vg2" x1="0" y1="0" x2="0" y2="1"><stop offset="0" stop-color="#e8e8e8"/><stop offset="1" stop-color="#d2d2d2"/></linearGradient></defs>
 <path d="M1103 203L1126 222L1176 210L1170 200L1127 214Z" fill="#b0b0b0" opacity="0.550" filter="url(#blur1)"/>
 <path d="M1105 156.300L1142.500 151L1170.400 159.500L1126.600 165.300Z" fill="#efefef" fill-opacity="0.920"/>
 <path d="M1105 156.300L1126.600 165.300V216.500L1105.600 199Z" fill="url(#vg2)" fill-opacity="0.920"/>
 <path d="M1126.600 165.300L1170.400 159.500L1169 204.800L1126.600 216.500Z" fill="url(#vg1)" fill-opacity="0.930"/>
 <g fill="none" stroke="#909494" stroke-width="0.900" stroke-dasharray="8 3" filter="url(#blur2)">
  <path d="M1105 156.300L1142.500 151L1170.400 159.500L1126.600 165.300Z"/><path d="M1126.600 165.300V216.500"/><path d="M1170.400 159.500L1169 204.800L1126.600 216.500"/>
 </g>
 <g filter="url(#blur2)">
 <path d="M1104.300 148V156L1105.800 199" stroke="#5b98f0" stroke-width="1.800" fill="none"/>
 <path d="M1106 199.300L1127 217.300L1132 221" stroke="#f0957e" stroke-width="1.800" fill="none"/>
 <text transform="matrix(1,-0.140,0,1,1134.500,192.700)" font-family="Liberation Sans" font-weight="bold" font-size="11.500" fill="#9ea2a4" textLength="28.500" lengthAdjust="spacingAndGlyphs">RIGHT</text>
 <text transform="matrix(0.500,0.430,0,1,1108.500,181.500)" font-family="Liberation Sans" font-weight="bold" font-size="11.500" fill="#a4a8aa" textLength="32" lengthAdjust="spacingAndGlyphs">FRONT</text>
 <text transform="matrix(0.900,0.100,-0.700,0.300,1134,160.500)" font-family="Liberation Sans" font-weight="bold" font-size="9" fill="#b0b4b4">TOP</text>
 <text transform="translate(1099,146) scale(0.820,1)" font-family="Liberation Sans" font-weight="bold" font-size="14.500" fill="#5b98f0">Z</text>
 <text transform="translate(1130.600,229) scale(0.800,1)" font-family="Liberation Sans" font-weight="bold" font-size="13.500" fill="#f0857a">X</text>
 </g>
</svg>

<!-- nav bar -->
<div class="abs" style="left:481px;top:926px;width:237px;height:24px;background:#f0f0f0"></div>
<svg width="0" height="0" style="position:absolute"><defs><path id="dd" d="M0 0H6L3 3.600Z" fill="#332c2c"/></defs></svg>
<!-- orbit -->
<svg class="ico" style="left:483px;top:928px" width="30" height="20" viewBox="0 0 30 20">
 <ellipse cx="8.700" cy="10.300" rx="7.400" ry="2.500" fill="none" stroke="#2a2a30" stroke-width="1.200"/>
 <path d="M8.200 5V18H10.800V5" fill="#f8f8f8" stroke="#3a3f55" stroke-width="0.800"/>
 <path d="M9.500 2L12.300 5.300H6.700Z" fill="#f8f8f8" stroke="#3a3f55" stroke-width="0.800" stroke-linejoin="round"/>
 <path d="M11 12.500Q5 13 4.500 12.600" stroke="#2a2a30" stroke-width="1.200" fill="none"/>
 <path d="M2.500 13.300L6.500 10.800V15.800Z" fill="#1e1e22"/>
 <path d="M22 8.200H28L25 11.800Z" fill="#332c2c"/>
</svg>
<!-- look at -->
<svg class="ico" style="left:516px;top:929px" width="18" height="18" viewBox="0 0 18 18">
 <path d="M3 6.500L7 2.500L8.500 4L14 2.300V6.500" fill="#d8dae6" stroke="#3a3f55" stroke-width="1"/>
 <rect x="1.500" y="6.500" width="15" height="10" fill="#e8e9f0" stroke="#3a3f55" stroke-width="1.300"/>
 <rect x="4.500" y="9.500" width="9" height="4" fill="#9ea2b5" stroke="#3a3f55" stroke-width="0.800"/>
</svg>
<!-- pan hand -->
<svg class="ico" style="left:542px;top:929px" width="19" height="20" viewBox="0 0 19 20">
 <path d="M5.300 11V5.200Q5.300 4 6.300 4T7.400 5.200V8.500L7.600 3.300Q7.700 2 8.800 2T9.900 3.300V8.500L10.300 3.700Q10.400 2.500 11.500 2.600T12.500 3.900L12.300 9L13.600 5.800Q14.100 4.800 15.100 5.200T15.700 6.600L14.500 12.500Q14 15.500 12.500 17.500H7Q5.500 15.800 2.300 12.300Q1.300 11.100 2.200 10.400T4.200 10.600Z" fill="#fafafa" stroke="#3a3f55" stroke-width="1" stroke-linejoin="round"/>
</svg>
<!-- zoom +- -->
<svg class="ico" style="left:568px;top:929px" width="18" height="18" viewBox="0 0 18 18">
 <circle cx="6.300" cy="7.800" r="4.300" fill="#f8f8f8" stroke="#3a3f55" stroke-width="1.100"/>
 <path d="M9.500 11L13.600 15" stroke="#2a2a2a" stroke-width="2.200" stroke-linecap="round"/>
 <path d="M11.700 3.700H16.300M14 1.400V6M11.700 7.800H16.300" stroke="#2a2a2a" stroke-width="1"/>
</svg>
<!-- zoom window -->
<svg class="ico" style="left:594px;top:929px" width="30" height="20" viewBox="0 0 30 20">
 <circle cx="7.300" cy="8" r="5.800" fill="#f8f8f8" stroke="#26262c" stroke-width="1.200"/>
 <rect x="4.500" y="5.200" width="5.600" height="5.600" rx="0.800" fill="#fafafa" stroke="#3a3f6a" stroke-width="1"/>
 <path d="M11.500 12.200L16 16.500" stroke="#26262c" stroke-width="2.400" stroke-linecap="round"/>
 <use href="#dd" x="22" y="8.500"/>
</svg>
<!-- display settings -->
<svg class="ico" style="left:628px;top:930px" width="26" height="18" viewBox="0 0 26 18">
 <rect x="0.600" y="0.600" width="15.300" height="11.800" rx="1.200" fill="#f6f6f6" stroke="#4a4a4a" stroke-width="1"/>
 <rect x="2.800" y="2.600" width="11" height="7.800" rx="0.800" fill="#a6d8f4" stroke="#3a4888" stroke-width="1"/>
 <rect x="4.500" y="6.800" width="7.600" height="1.800" fill="#96aab4"/>
 <path d="M6 12.500H10.500L11.500 14.800H5Z" fill="#f8f8f8" stroke="#8a8a8a" stroke-width="0.600"/><rect x="4.200" y="14.600" width="8" height="1.300" fill="#fafafa" stroke="#9a9a9a" stroke-width="0.400"/>
 <use href="#dd" x="19" y="7.500"/>
</svg>
<!-- grid -->
<svg class="ico" style="left:659px;top:930px" width="26" height="18" viewBox="0 0 26 18">
 <defs><linearGradient id="gg" x1="0" y1="0" x2="0" y2="1"><stop offset="0" stop-color="#ffffff"/><stop offset="0.450" stop-color="#e4e4e4"/><stop offset="1" stop-color="#8e8e8e"/></linearGradient></defs>
 <rect x="0.400" y="0.400" width="15.700" height="15.700" rx="0.800" fill="#5e5e5e"/>
 <rect x="1.200" y="1.200" width="14.100" height="14.100" fill="url(#gg)"/>
 <path d="M3.900 1V15.500M6.850 1V15.500M9.800 1V15.500M12.750 1V15.500M1 3.900H15.500M1 6.850H15.500M1 9.800H15.500M1 12.750H15.500" stroke="#5e5e5e" stroke-width="0.850"/>
 <use href="#dd" x="19" y="7.500"/>
</svg>
<!-- viewports -->
<svg class="ico" style="left:689px;top:930px" width="26" height="18" viewBox="0 0 26 18">
 <rect x="1" y="1.800" width="15" height="12.600" rx="1.200" fill="#2c4c9c"/>
 <g fill="#9cc6f6"><rect x="2.400" y="3.200" width="5.400" height="4.200"/><rect x="9.200" y="3.200" width="5.400" height="4.200"/><rect x="2.400" y="8.800" width="5.400" height="4.200"/><rect x="9.200" y="8.800" width="5.400" height="4.200"/></g>
 <g fill="#8aa2a8"><rect x="3.800" y="4.500" width="2.600" height="1.500"/><rect x="10.600" y="4.500" width="2.600" height="1.500"/><rect x="3.800" y="10.100" width="2.600" height="1.500"/><rect x="10.600" y="10.100" width="2.600" height="1.500"/></g>
 <use href="#dd" x="19.500" y="7.500"/>
</svg>
<!-- comments -->
<div class="abs" style="left:4px;top:925px;width:300px;height:25px;background:#f2f2f2;border-left:1px solid #c6c6c6;border-bottom:1px solid #bdbdbd;border-right:1px solid #c6c6c6"></div>
<div class="abs" style="left:29px;top:931px;font-size:11px;color:#484848">COMMENTS</div>
<svg class="ico" style="left:282px;top:932px" width="10" height="10" viewBox="0 0 10 10"><circle cx="5" cy="5" r="4.600" fill="#222"/><path d="M5 2.300V7.700M2.300 5H7.700" stroke="#f2f2f2" stroke-width="1.300"/></svg>
<div class="abs" style="left:299px;top:931px;width:1px;height:12px;background:#666"></div>
<div class="abs" style="left:301px;top:933px;width:1px;height:8px;background:#aaa"></div>
<!-- bottom bar -->
<div class="abs" style="left:0;top:954px;width:1200px;height:47px;background:#f2f2f2;border-top:1px solid #d2d2d2"></div>
<div class="abs" style="left:0;top:1001px;width:1200px;height:3px;background:#3a3a3a"></div>
<svg class="ico" style="left:0;top:955px" width="260" height="46" viewBox="0 955 260 46">
 <g fill="#50504b">
  <rect x="10.800" y="972" width="2" height="14"/><path d="M23.300 972V986L13.500 979Z"/>
  <path d="M45 972.500V985.500L35.200 979Z"/><rect x="46.300" y="976" width="1.800" height="6"/>
  <path d="M61 971V987L72.800 979Z"/>
  <rect x="84.800" y="976" width="1.800" height="6"/><path d="M88 972.500V985.500L97.800 979Z"/>
  <path d="M111 972V986L120.800 979Z"/><rect x="121.200" y="972" width="2" height="14"/>
 </g>
 <rect x="144" y="962" width="92" height="5.800" fill="#63d0de"/>
 <path d="M155 989V995H226V989M178 989V995M202 989V995" fill="none" stroke="#c8cccb" stroke-width="2"/>
 <g id="tls"><path d="M149.800 971.200H158.200M148.200 973.500V982.500M160.200 973.500V978.500M149.800 984.200H154" stroke="#4a4a4a" stroke-width="1.100" fill="none"/>
  <rect x="146" y="970" width="2.300" height="2.300" fill="#1a85d8"/><rect x="159" y="970" width="2.300" height="2.300" fill="#1a85d8"/><rect x="146" y="983" width="2.300" height="2.300" fill="#1a85d8"/>
  <path d="M155 984L159.500 979.800L161.300 981.700L157 985.800Z" fill="#f0c468"/><path d="M159.500 979.800L160.700 978.600L162.500 980.500L161.300 981.700Z" fill="#e8402a"/><path d="M154 986.200L155 984L157 985.800Z" fill="#666"/></g>
 <use href="#tls" x="48"/>
 <path d="M170 973L172.500 970H182L179.500 973Z" fill="#9ad0f5"/><path d="M170 973H179.500V982.500H170Z" fill="#68b0e4"/><path d="M179.500 973L182 970V980L179.500 982.500Z" fill="#3f86c4"/>
 <path d="M170 983H179.500L182 980.500V983L179.500 985.500H170Z" fill="#c4c8cc"/>
 <path d="M184.500 983V972.500" stroke="#222" stroke-width="1.100"/><path d="M183 973.500L184.500 971L186 973.500Z" fill="#222"/>
 <path d="M218 975L228 970L234 979.500L223 985.500Z" fill="#e0925a" opacity="0.850"/>
 <path d="M220.500 977L229 973.500L229.500 982L221.500 984Z" fill="#dcdcd8"/>
 <path d="M220.500 977V984" stroke="#555" stroke-width="1"/>
 <rect x="219.500" y="975.500" width="2.300" height="2.300" fill="#2ea04a"/><rect x="227.800" y="973.800" width="2.300" height="2.300" fill="#2ea04a"/><rect x="225.800" y="981.500" width="2.300" height="2.300" fill="#2ea04a"/>
 <path d="M232 963.200H244V967.500L239.200 972.500H236.800L232 967.500Z" fill="#606060"/><rect x="237" y="968" width="2" height="28" fill="#606060"/>
</svg>
<!-- cursor ring + gear -->
<svg class="ico" style="left:1080px;top:955px" width="120" height="49" viewBox="1080 955 120 49">
 <path d="M1185.52 982.03L1184.56 984.35L1182.32 983.54L1181.44 984.42L1182.25 986.66L1179.93 987.62L1178.92 985.46L1177.68 985.46L1176.67 987.62L1174.35 986.66L1175.16 984.42L1174.28 983.54L1172.04 984.35L1171.08 982.03L1173.24 981.02L1173.24 979.78L1171.08 978.77L1172.04 976.45L1174.28 977.26L1175.16 976.38L1174.35 974.14L1176.67 973.18L1177.68 975.34L1178.92 975.34L1179.93 973.18L1182.25 974.14L1181.44 976.38L1182.32 977.26L1184.56 976.45L1185.52 978.77L1183.36 979.78L1183.36 981.02Z" fill="#8f9297"/><circle cx="1178.3" cy="980.4" r="2.100" fill="#f2f2f2"/>
 <circle cx="1164" cy="1019.800" r="49" fill="none" stroke="#fbf84a" stroke-width="15.900"/>
 <circle cx="1164" cy="1019.800" r="46.300" fill="none" stroke="#ee6a14" stroke-width="2.900"/>
</svg>

</body></html>
